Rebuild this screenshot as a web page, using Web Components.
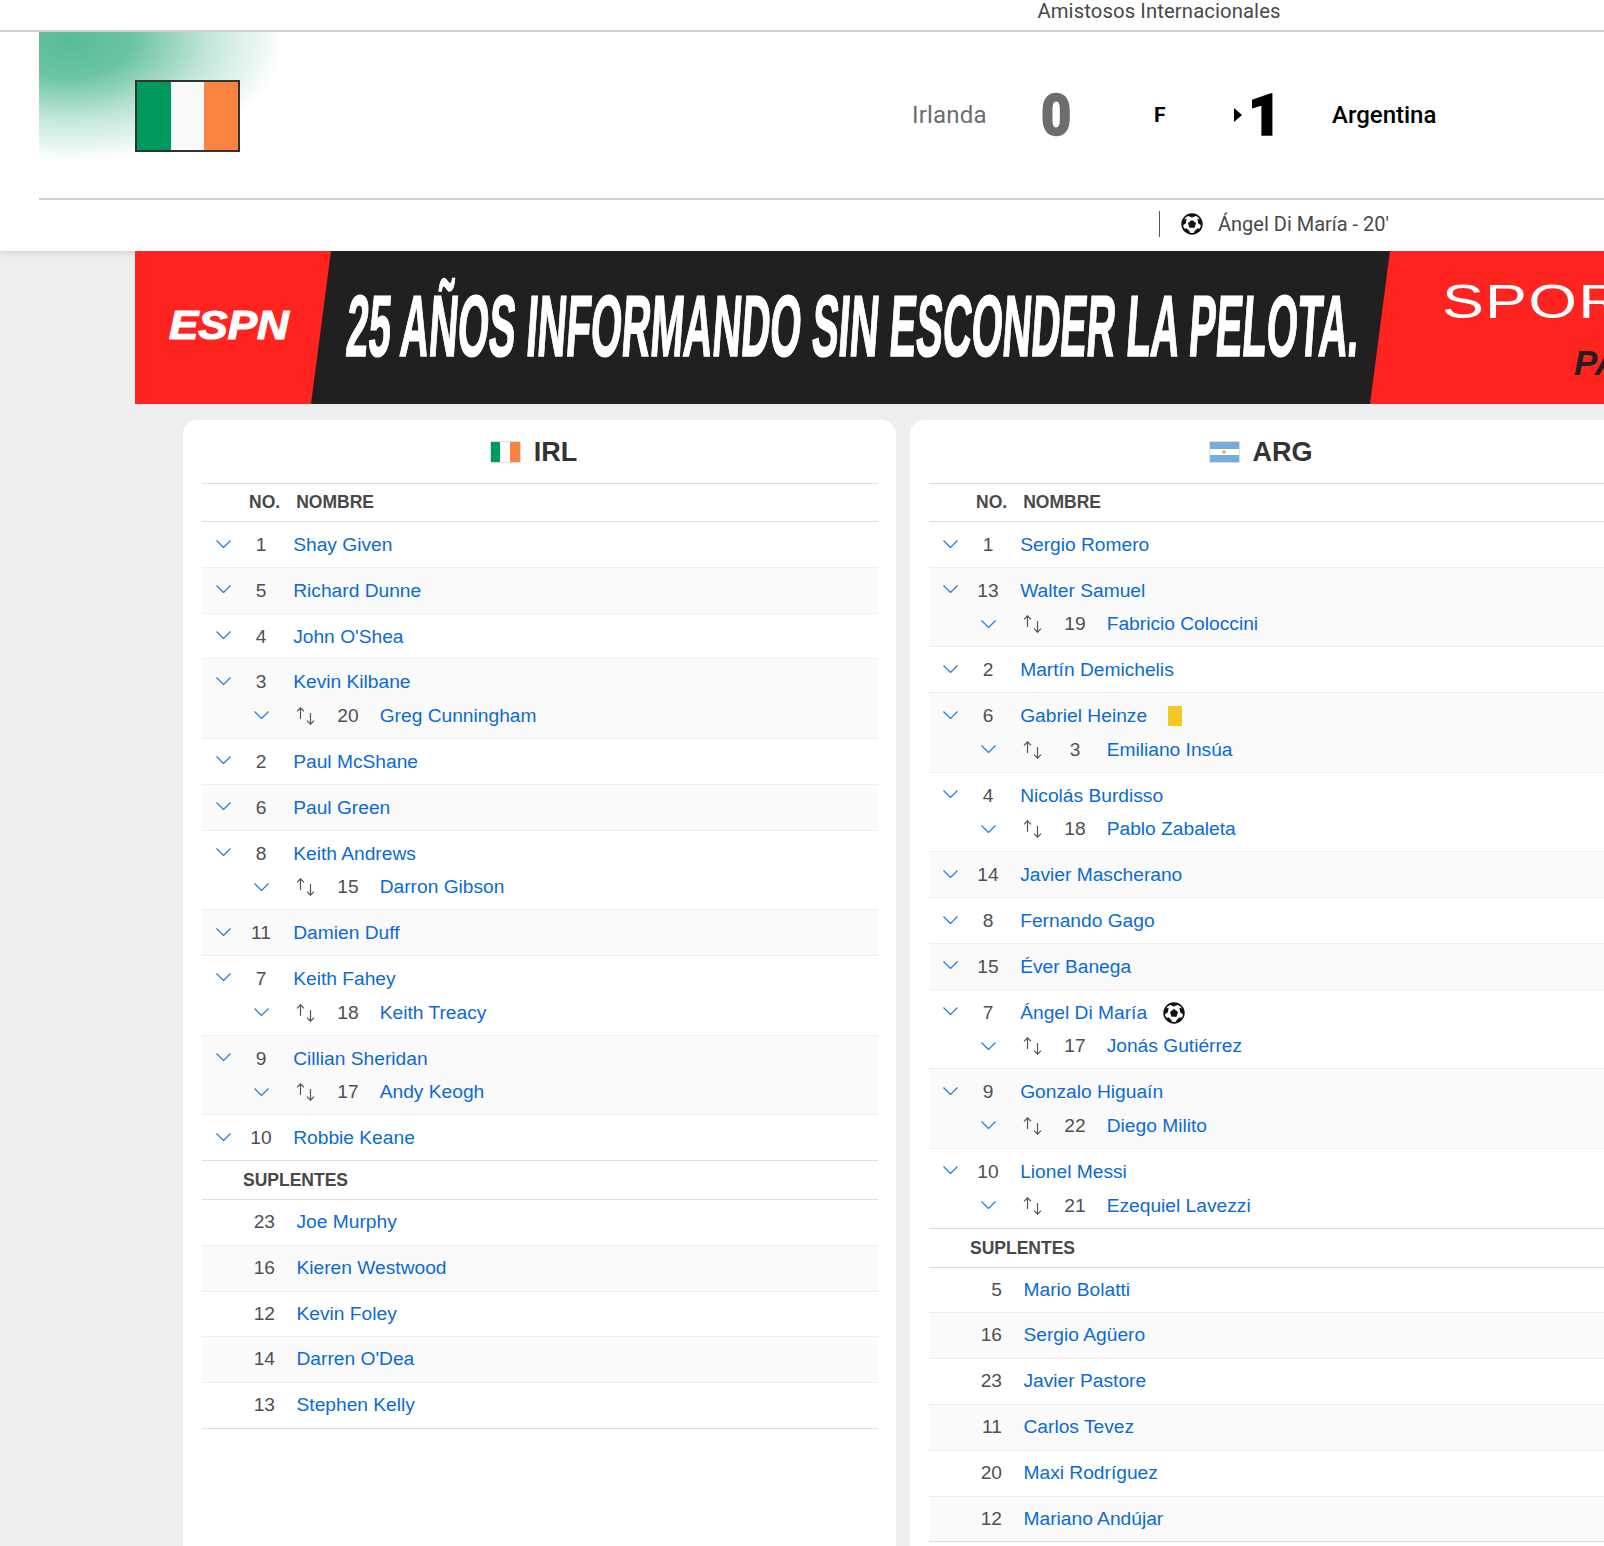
<!DOCTYPE html>
<html lang="es"><head><meta charset="utf-8"><title>Irlanda 0 - 1 Argentina</title>
<style>
html,body{margin:0;padding:0;background:#edeef0;overflow:hidden;width:1604px;height:1546px;font-family:"Liberation Sans",Arial,sans-serif}
.cards{display:grid;grid-template-columns:713px 713px;gap:14px;padding:16px 0 0 183px;width:1500px}
</style></head><body>
<score-header></score-header>
<promo-banner></promo-banner>
<div class="cards">
<lineup-card code="IRL">
<lineup-section kind="start">
<player-row no="1" name="Shay Given"></player-row>
<player-row no="5" name="Richard Dunne"></player-row>
<player-row no="4" name="John O'Shea"></player-row>
<player-row no="3" name="Kevin Kilbane" sub-no="20" sub-name="Greg Cunningham"></player-row>
<player-row no="2" name="Paul McShane"></player-row>
<player-row no="6" name="Paul Green"></player-row>
<player-row no="8" name="Keith Andrews" sub-no="15" sub-name="Darron Gibson"></player-row>
<player-row no="11" name="Damien Duff"></player-row>
<player-row no="7" name="Keith Fahey" sub-no="18" sub-name="Keith Treacy"></player-row>
<player-row no="9" name="Cillian Sheridan" sub-no="17" sub-name="Andy Keogh"></player-row>
<player-row no="10" name="Robbie Keane"></player-row>
</lineup-section>
<lineup-section kind="bench">
<player-row bench no="23" name="Joe Murphy"></player-row>
<player-row bench no="16" name="Kieren Westwood"></player-row>
<player-row bench no="12" name="Kevin Foley"></player-row>
<player-row bench no="14" name="Darren O'Dea"></player-row>
<player-row bench no="13" name="Stephen Kelly"></player-row>
</lineup-section>
</lineup-card>
<lineup-card code="ARG">
<lineup-section kind="start">
<player-row no="1" name="Sergio Romero"></player-row>
<player-row no="13" name="Walter Samuel" sub-no="19" sub-name="Fabricio Coloccini"></player-row>
<player-row no="2" name="Martín Demichelis"></player-row>
<player-row no="6" name="Gabriel Heinze" mark="card" sub-no="3" sub-name="Emiliano Insúa"></player-row>
<player-row no="4" name="Nicolás Burdisso" sub-no="18" sub-name="Pablo Zabaleta"></player-row>
<player-row no="14" name="Javier Mascherano"></player-row>
<player-row no="8" name="Fernando Gago"></player-row>
<player-row no="15" name="Éver Banega"></player-row>
<player-row no="7" name="Ángel Di María" mark="goal" sub-no="17" sub-name="Jonás Gutiérrez"></player-row>
<player-row no="9" name="Gonzalo Higuaín" sub-no="22" sub-name="Diego Milito"></player-row>
<player-row no="10" name="Lionel Messi" sub-no="21" sub-name="Ezequiel Lavezzi"></player-row>
</lineup-section>
<lineup-section kind="bench">
<player-row bench no="5" name="Mario Bolatti"></player-row>
<player-row bench no="16" name="Sergio Agüero"></player-row>
<player-row bench no="23" name="Javier Pastore"></player-row>
<player-row bench no="11" name="Carlos Tevez"></player-row>
<player-row bench no="20" name="Maxi Rodríguez"></player-row>
<player-row bench no="12" name="Mariano Andújar"></player-row>
</lineup-section>
</lineup-card>
</div>
<script>
const ball = s => `<svg width="${s}" height="${s}" viewBox="0 0 24 24" aria-hidden="true"><circle cx="12" cy="12" r="10.8" fill="#fff" stroke="#111" stroke-width="1.8"/><path fill="#111" d="M12 7.600l4.400 3.200-1.700 5.200H9.300l-1.700-5.200zM12 1.400c1.900 0 3.700.5 5.200 1.400L12 5 6.800 2.800C8.300 1.900 10.100 1.400 12 1.400zM21.900 8.500c.5 1.600.6 3.300.2 5l-3.400-2.200-.9-4.900c1.900 0 3.200.9 4.100 2.100zM2.100 8.500C3 7.300 4.300 6.400 6.200 6.400l-.9 4.900-3.400 2.200c-.4-1.700-.3-3.400.2-5zM6.100 21.100C4.700 20.200 3.600 18.900 2.800 17.300l3.600-.5 3.300 3.700-.3 2.200c-1.200-.3-2.300-.9-3.300-1.600zM17.900 21.100c-1 .7-2.100 1.300-3.300 1.600l-.3-2.200 3.300-3.700 3.600.5c-.8 1.600-1.900 2.900-3.300 3.800z"/></svg>`;
const chevron = `<svg width="15" height="8" viewBox="0 0 15 8" aria-hidden="true"><path d="M.5.5l7 7 7-7" fill="none" stroke="#1b7fdc" stroke-width="1.2"/></svg>`;
const arrows = `<svg width="21" height="18" viewBox="0 0 21 18" aria-hidden="true"><path d="M5.500 12V1M2 4.300L5.500 .8 9 4.300M15.500 6v11M12 13.700l3.500 3.500 3.500-3.500" fill="none" stroke="#555" stroke-width="1.200"/></svg>`;

class ScoreHeader extends HTMLElement{
  constructor(){super();this.attachShadow({mode:"open"}).innerHTML=`<style>
  :host{display:block;width:2318px;background:#fff;box-shadow:0 2px 6px rgba(0,0,0,.12);font-family:Roboto,"Liberation Sans",sans-serif;position:relative}
  .comp{height:30px;border-bottom:2px solid #d0d0d0;text-align:center;font-size:20.300px;line-height:23px;color:#48494a;letter-spacing:.1px}
  .main{margin-left:39px;height:166px;border-bottom:2px solid #d0d0d0;display:flex;align-items:center;
    background:radial-gradient(ellipse 215px 122px at 30px 8px,rgba(0,154,94,.66) 0,rgba(0,154,94,.58) 30%,rgba(0,154,94,.24) 65%,rgba(0,154,94,0) 100%) 0 0/250px 140px no-repeat}
  .flagcol{width:873px;flex:none;padding-left:96px;box-sizing:border-box;display:flex}
  .flag{width:105px;height:72px;box-sizing:border-box;border:2px solid #333;display:flex;margin-top:2px}
  .flag i{flex:1}
  .name{font-size:24px;flex:none;margin-bottom:1px}
  .irl{width:129px;color:#6c6d6f;letter-spacing:.2px}
  .digit{font:900 58px/58px Roboto,"Liberation Sans",sans-serif;flex:none;display:block;transform-origin:left center;-webkit-text-stroke:1.500px currentColor}
  .zero{width:113px;color:#6c6d6f;transform:scaleX(.9)}
  .st{width:80px;flex:none;font-size:21px;font-weight:700;color:#000}
  .win{width:98px;flex:none;display:flex;align-items:center;color:#000}
  .tri{width:0;height:0;border-left:8px solid #000;border-top:7px solid transparent;border-bottom:7px solid transparent;margin-right:6px}
  .arg{color:#000;font-weight:500}
  .scorers{height:51px;display:flex;align-items:center;padding:0 0 3px 1159px;box-sizing:border-box;font-size:20px;color:#48494a}
  .div{width:1px;height:26px;background:#555;margin-right:21px}
  .scorers svg{margin-right:15px;display:block}
  </style>
  <div class="comp">Amistosos Internacionales</div>
  <div class="main">
    <div class="flagcol"><div class="flag"><i style="background:#009a5e"></i><i style="background:#fafafa"></i><i style="background:#f98340"></i></div></div>
    <div class="name irl">Irlanda</div>
    <div class="digit zero">0</div>
    <div class="st">F</div>
    <div class="win"><span class="tri"></span><span class="digit">1</span></div>
    <div class="name arg">Argentina</div>
  </div>
  <div class="scorers"><span class="div"></span>${ball(22)}<span>Ángel Di María - 20'</span></div>`;}
}
customElements.define("score-header",ScoreHeader);

class PromoBanner extends HTMLElement{
  constructor(){super();this.attachShadow({mode:"open"}).innerHTML=`<style>
  :host{display:flex;margin-left:135px;height:153px;background:#ff2420;overflow:hidden;position:relative;font-family:"Liberation Sans",sans-serif}
  .l{width:176px;flex:none;display:flex;align-items:center;overflow:hidden}
  .logo{font:italic 700 40px/1 "Liberation Sans",sans-serif;color:#fff;margin-left:34px;-webkit-text-stroke:1.200px #fff;transform:scaleX(1.1);transform-origin:left;margin-top:-6px}
  .m{width:1079px;flex:none;background:#211f20;clip-path:polygon(20px 0,100% 0,calc(100% - 20px) 100%,0 100%);overflow:hidden;display:flex;align-items:center}
  .t{font:700 87px/1 "Liberation Sans",sans-serif;color:#fff;white-space:nowrap;flex:none;margin-left:36px;margin-top:-4px;transform-origin:left center;transform:skewX(-4deg) scaleX(.458);-webkit-text-stroke:1.500px #fff}
  .r{flex:1;padding-left:52px;overflow:hidden;white-space:nowrap}
  .s{font:400 49px/1 "Liberation Sans",sans-serif;color:#fff;margin-top:26px;letter-spacing:1px;transform-origin:left;transform:scaleX(1.28)}
  .p{font:italic 700 35px/1 "Liberation Sans",sans-serif;color:#211f20;margin:19px 0 0 132px}
  </style>
  <div class="l"><span class="logo">ESPN</span></div>
  <div class="m"><span class="t">25 AÑOS INFORMANDO SIN ESCONDER LA PELOTA.</span></div>
  <div class="r"><div class="s">SPOR</div><div class="p">PA</div></div>`;}
}
customElements.define("promo-banner",PromoBanner);

const flags={
 IRL:`<span style="flex:1;background:#009a5e"></span><span style="flex:1;background:#fafafa"></span><span style="flex:1;background:#f98340"></span>`,
 ARG:`<span style="flex:1;display:block;background:linear-gradient(#74acdf 0 33%,#fff 33% 67%,#74acdf 67%);position:relative"><span style="position:absolute;left:12px;top:8px;width:4px;height:4px;border-radius:50%;background:#e8b93a"></span></span>`};
class LineupCard extends HTMLElement{
  constructor(){super();const c=this.getAttribute("code");this.attachShadow({mode:"open"}).innerHTML=`<style>
  :host{display:block;background:#fff;border-radius:14px 14px 0 0;padding:0 18px 30px 19px}
  .title{height:63px;display:flex;align-items:center;justify-content:center;padding-right:12px;font:700 27px/1 "Liberation Sans",sans-serif;color:#333;border-bottom:1px solid #ddd}
  .flag{width:29px;height:20px;display:flex;margin-right:14px;box-shadow:0 0 0 .5px #bbb;margin-top:1px}
  .code{margin-top:2px}
  </style>
  <div class="title"><span class="flag">${flags[c]}</span><span class="code">${c}</span></div><slot></slot>`;}
}
customElements.define("lineup-card",LineupCard);

class LineupSection extends HTMLElement{
  constructor(){super();const b=this.getAttribute("kind")==="bench";this.attachShadow({mode:"open"}).innerHTML=`<style>
  :host{display:block}
  .head{height:36px;padding-top:1px;border-bottom:1px solid #ddd;display:flex;align-items:center;font:700 17.500px/1 "Liberation Sans",sans-serif;color:#484848}
  .no{margin-left:47px;width:47.200px}
  .sup{margin-left:41px}
  ${b?".head{height:36px;padding-top:2px;border-bottom:1px solid #ddd}":""}
  ::slotted(player-row:last-child){--last:#ddd}
  </style>
  <div class="head">${b?'<span class="sup">SUPLENTES</span>':'<span class="no">NO.</span><span>NOMBRE</span>'}</div><slot></slot>`;}
}
customElements.define("lineup-section",LineupSection);

class PlayerRow extends HTMLElement{
  constructor(){super();const g=a=>this.getAttribute(a);const b=this.hasAttribute("bench");
  const mark=g("mark")==="card"?'<span class="card"></span>':g("mark")==="goal"?'<span class="goal">'+ball(22)+'</span>':"";
  this.attachShadow({mode:"open"}).innerHTML=`<style>
  :host{display:block;box-sizing:border-box;padding:6px 0 5.200px;border-bottom:1px solid var(--last,#efefef);font:19.200px/33.600px "Liberation Sans",sans-serif;color:#505050}
  :host(:nth-child(even)){background:#fafafa}
  :host(:not([sub-no])){height:45.800px}
  :host([sub-no]){height:79.600px;padding-bottom:5px}
  :host([bench]){height:45.800px;padding-top:5px}
  .line{display:flex;align-items:center;height:33.600px}
  .line.sub{height:34px;line-height:34px}
  a{color:#0b6bd3;text-decoration:none;white-space:nowrap}
  .chev{display:block;flex:none;margin-bottom:7px}
  .sub .chev{margin-bottom:5px}
  .n{flex:none;text-align:center}
  .card{display:block;width:14px;height:20px;background:#f5c725;margin:0 0 -1px 21px}
  .goal{display:block;margin:0 0 0 16px;height:22px}
  .goal svg{display:block}
  .arr{display:block;flex:none;margin-top:6px}
  </style>
  ${b?`<div class="line"><span class="n" style="width:73px;text-align:right">${g("no")}</span><a href="#" style="margin-left:21.500px">${g("name")}</a></div>`:
  `<div class="line"><span class="chev" style="margin-left:14px">${chevron}</span><span class="n" style="width:60px">${g("no")}</span><a href="#" style="margin-left:2.200px">${g("name")}</a>${mark}</div>`}
  ${g("sub-no")?`<div class="line sub"><span class="chev" style="margin-left:52px">${chevron}</span><span class="arr" style="margin-left:26px">${arrows}</span><span class="n" style="width:46px;margin-left:9px">${g("sub-no")}</span><a href="#" style="margin-left:8.700px">${g("sub-name")}</a></div>`:""}`;}
}
customElements.define("player-row",PlayerRow);
</script>
</body></html>
